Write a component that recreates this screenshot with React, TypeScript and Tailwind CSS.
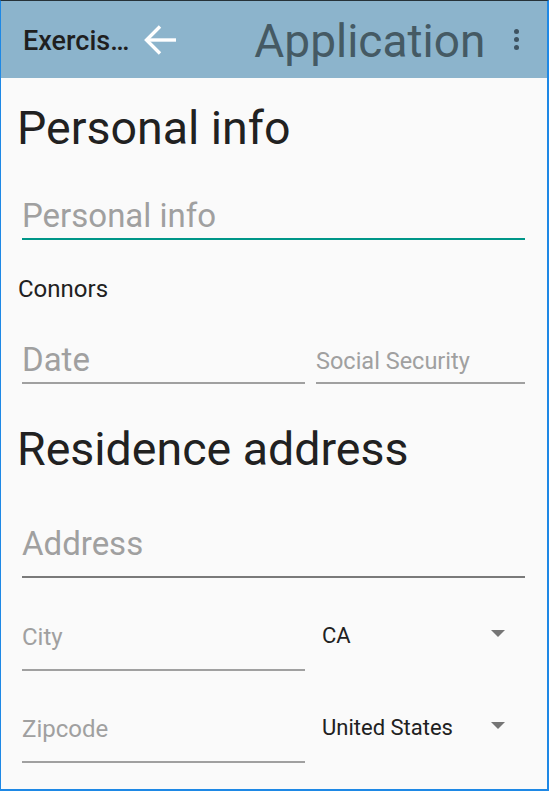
import React from "react";

const font = { fontFamily: "Roboto, 'Noto Sans', sans-serif" };

function Underline({ color = "bg-[#a0a0a0]" }: { color?: string }) {
  return <div className={`h-[2px] w-full ${color}`} />;
}

function Caret() {
  return (
    <svg width="14" height="7" viewBox="0 0 14 7" className="-mt-[6px]">
      <path d="M0 0h14L7 7z" fill="#757575" />
    </svg>
  );
}

export default function App() {
  return (
    <div
      style={font}
      className="flex h-[791px] w-[549px] flex-col border-t border-l border-r-2 border-b-2 border-t-[#263238] border-l-[#1e88e5] border-r-[#1e88e5] border-b-[#1e88e5] bg-[#fafafa]"
    >
      {/* toolbar */}
      <header className="flex h-[77px] shrink-0 items-center bg-[#8cb4cc] pl-[22px] pr-[28px]">
        <span className="mt-[3px] text-[27px] leading-none font-medium text-[#1f1f1f]">
          Exercis…
        </span>
        <svg width="34" height="32" viewBox="0 0 34 32" className="ml-[14px]">
          <path d="M33 16H4" stroke="#fff" strokeWidth="3.4" fill="none" />
          <path d="M17 2.5L3.5 16L17 29.5" stroke="#fff" strokeWidth="3.4" fill="none" />
        </svg>
        <span className="ml-[77px] mt-[3px] text-[46px] leading-none text-[#455a64]">
          Application
        </span>
        <div className="ml-auto flex flex-col gap-[3px]">
          <span className="h-[5px] w-[5px] rounded-full bg-[#3e5361]" />
          <span className="h-[5px] w-[5px] rounded-full bg-[#3e5361]" />
          <span className="h-[5px] w-[5px] rounded-full bg-[#3e5361]" />
        </div>
      </header>

      <main className="flex flex-col pl-[16px] pr-[22px]">
        <h1 className="mt-[27px] text-[46.5px] leading-none font-normal text-[#212121]">
          Personal info
        </h1>

        <div className="ml-[5px] mt-[47px] flex flex-col">
          <span className="text-[33px] leading-none text-[#a0a0a0]">Personal info</span>
          <div className="mt-[6px]">
            <Underline color="bg-[#009688]" />
          </div>
        </div>

        <p className="ml-[1px] mt-[37px] text-[24px] leading-none text-[#212121]">Connors</p>

        <div className="ml-[5px] mt-[42px] flex items-end gap-[11px]">
          <div className="flex w-[283px] flex-col">
            <span className="text-[33px] leading-none text-[#a0a0a0]">Date</span>
            <div className="mt-[6px]">
              <Underline />
            </div>
          </div>
          <div className="flex flex-1 flex-col">
            <span className="text-[23.5px] leading-none text-[#a0a0a0]">Social Security</span>
            <div className="mt-[8px]">
              <Underline />
            </div>
          </div>
        </div>

        <h2 className="mt-[42px] text-[46.5px] leading-none font-normal text-[#212121]">
          Residence address
        </h2>

        <div className="ml-[5px] mt-[55px] flex flex-col">
          <span className="text-[33px] leading-none text-[#a0a0a0]">Address</span>
          <div className="mt-[16px]">
            <Underline color="bg-[#7a7a7a]" />
          </div>
        </div>

        <div className="ml-[5px] mt-[47px] flex items-start gap-[11px]">
          <div className="flex w-[283px] flex-col">
            <span className="text-[24px] leading-none text-[#a0a0a0]">City</span>
            <div className="mt-[20px]">
              <Underline />
            </div>
          </div>
          <div className="flex flex-1 items-center justify-between pl-[6px] pr-[20px]">
            <span className="text-[22px] leading-none text-[#212121]">CA</span>
            <Caret />
          </div>
        </div>

        <div className="ml-[5px] mt-[46px] flex items-start gap-[11px]">
          <div className="flex w-[283px] flex-col">
            <span className="text-[24px] leading-none text-[#a0a0a0]">Zipcode</span>
            <div className="mt-[20px]">
              <Underline />
            </div>
          </div>
          <div className="flex flex-1 items-center justify-between pl-[6px] pr-[20px]">
            <span className="text-[22px] leading-none text-[#212121]">United States</span>
            <Caret />
          </div>
        </div>
      </main>
    </div>
  );
}
